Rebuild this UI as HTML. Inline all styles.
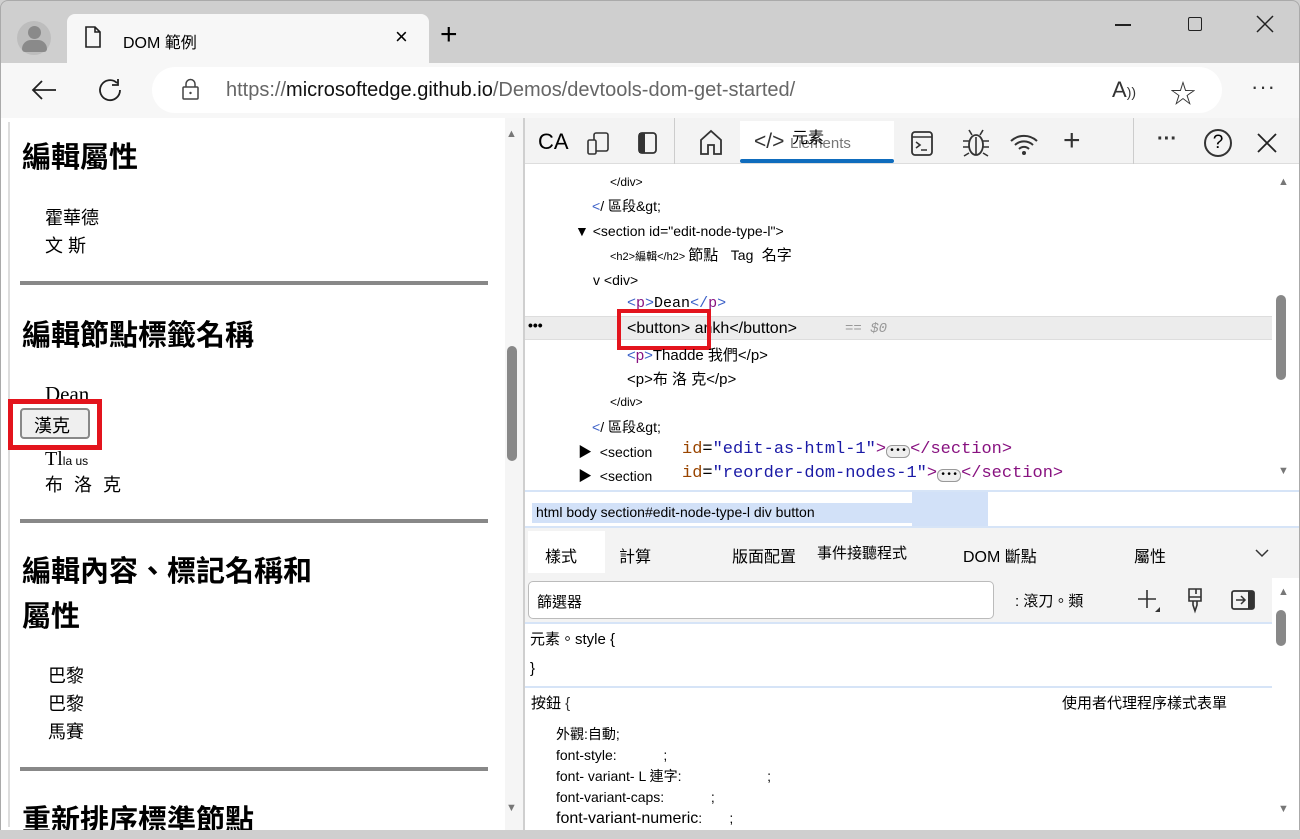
<!DOCTYPE html>
<html><head><meta charset="utf-8">
<style>
*{margin:0;padding:0;box-sizing:border-box}
body{width:1300px;height:835px;background:#cfcfcf;font-family:"Liberation Sans","Noto Sans CJK TC",sans-serif;position:relative;overflow:hidden;color:#000}
.a{position:absolute;white-space:nowrap}
.mono{font-family:"Liberation Mono","Noto Sans CJK TC",monospace}
.tag{color:#881280}.attr{color:#994500}.val{color:#1a1aa6}.br{color:#3c61c8}
</style></head><body>
<div class="a" style="left:0;top:0;width:1300px;height:835px;border:1px solid #aaa;border-radius:8px 8px 0 0"></div>
<div class="a" style="left:17px;top:21px;width:34px;height:34px;border-radius:50%;background:#bdbdbd"></div>
<div class="a" style="left:28px;top:26px;width:13px;height:13px;border-radius:50%;background:#8a8a8a"></div>
<div class="a" style="left:22px;top:40px;width:25px;height:12px;border-radius:12px 12px 4px 4px;background:#8a8a8a"></div>
<div class="a" style="left:67px;top:14px;width:362px;height:50px;background:#f7f7f7;border-radius:8px 8px 0 0"></div>
<svg class="a" style="left:84px;top:25px" width="18" height="24" viewBox="0 0 18 24"><path d="M2 2h9l5 5v15H2z M11 2v5h5" fill="none" stroke="#222" stroke-width="1.6"/></svg>
<div class="a" style="left:123px;top:29px;font-size:16px">DOM 範例</div>
<div class="a" style="left:395px;top:24px;font-size:22px">×</div>
<div class="a" style="left:440px;top:18px;font-size:30px;font-weight:300">+</div>
<div class="a" style="left:1115px;top:24px;width:16px;height:1.5px;background:#222"></div>
<div class="a" style="left:1188px;top:17px;width:14px;height:14px;border:1.5px solid #222;border-radius:2px"></div>
<svg class="a" style="left:1256px;top:15px" width="18" height="18"><path d="M1 1l16 16M17 1L1 17" stroke="#222" stroke-width="1.5"/></svg>
<div class="a" style="left:1px;top:63px;width:1298px;height:55px;background:#f7f7f7"></div>
<svg class="a" style="left:30px;top:78px" width="28" height="24"><path d="M26 12H3 M12 3L3 12l9 9" fill="none" stroke="#222" stroke-width="1.8"/></svg>
<svg class="a" style="left:97px;top:76px" width="28" height="28"><path d="M20 7a10 10 0 1 0 3 7 M21 3v6h-6" fill="none" stroke="#222" stroke-width="1.8"/></svg>
<div class="a" style="left:152px;top:67px;width:1070px;height:46px;background:#fff;border-radius:23px"></div>
<svg class="a" style="left:180px;top:78px" width="22" height="24"><rect x="3" y="9" width="15" height="12" rx="1" fill="none" stroke="#444" stroke-width="1.5"/><path d="M6 9V6a4.5 4.5 0 0 1 9 0v3" fill="none" stroke="#444" stroke-width="1.5"/><circle cx="10.5" cy="15" r="1.2" fill="#444"/></svg>
<div class="a" style="left:226px;top:79px;font-size:20px;color:#666">https://<span style="color:#111">microsoftedge.github.io</span>/Demos/devtools-dom-get-started/</div>
<div class="a" style="left:1112px;top:77px;font-size:22px;color:#333">A<span style="font-size:14px">))</span></div>
<div class="a" style="left:1170px;top:74px;font-size:26px;color:#333">☆</div>
<div class="a" style="left:1251px;top:74px;font-size:22px;color:#333;letter-spacing:1px">···</div>
<div class="a" style="left:1px;top:118px;width:522px;height:717px;background:#fff"></div>
<div class="a" style="left:505px;top:118px;width:18px;height:712px;background:#f5f5f5"></div>
<div class="a" style="left:506px;top:128px;font-size:11px;color:#777">▲</div>
<div class="a" style="left:506px;top:802px;font-size:11px;color:#777">▼</div>
<div class="a" style="left:507px;top:346px;width:10px;height:115px;background:#888;border-radius:5px"></div>
<div class="a" style="left:8px;top:122px;width:2px;height:705px;background:#ddd"></div>
<div class="a" style="left:22px;top:134px;font-size:29px;font-weight:bold">編輯屬性</div>
<div class="a" style="left:45px;top:204px;font-size:18px;line-height:28px">霍華德<br>文 斯</div>
<div class="a" style="left:20px;top:281px;width:468px;height:4px;background:#888"></div>
<div class="a" style="left:22px;top:312px;font-size:29px;font-weight:bold">編輯節點標籤名稱</div>
<div class="a" style="left:45px;top:382px;font-size:21px;font-family:'Liberation Serif',serif">Dean</div>
<div class="a" style="left:8px;top:399px;width:94px;height:51px;border:5px solid #e3141d"></div>
<div class="a" style="left:20px;top:408px;width:70px;height:31px;border:2px solid #888;border-radius:4px;background:#efefef;font-size:18px;padding:2px 0 0 12px">漢克</div>
<div class="a" style="left:45px;top:448px;font-size:20px;font-family:'Liberation Serif',serif">Tl<span style="font-size:12px;font-family:'Liberation Sans'">la us</span></div>
<div class="a" style="left:45px;top:471px;font-size:18px;letter-spacing:3px">布 洛 克</div>
<div class="a" style="left:20px;top:519px;width:468px;height:4px;background:#888"></div>
<div class="a" style="left:22px;top:550px;font-size:29px;font-weight:bold;line-height:45px">編輯內容、標記名稱和<br>屬性</div>
<div class="a" style="left:48px;top:662px;font-size:18px;line-height:28px">巴黎<br>巴黎<br>馬賽</div>
<div class="a" style="left:20px;top:767px;width:468px;height:4px;background:#888"></div>
<div class="a" style="left:22px;top:797px;font-size:29px;font-weight:bold">重新排序標準節點</div>
<div class="a" style="left:523px;top:118px;width:2px;height:717px;background:#cfcfcf"></div>
<div class="a" style="left:525px;top:118px;width:774px;height:717px;background:#fff"></div>
<div class="a" style="left:525px;top:118px;width:774px;height:46px;background:#f3f3f3;border-bottom:1px solid #ddd"></div>
<div class="a" style="left:538px;top:129px;font-size:22px">CA</div>
<svg class="a" style="left:585px;top:130px" width="28" height="28"><rect x="9" y="3" width="14" height="18" rx="2" fill="none" stroke="#333" stroke-width="1.6"/><rect x="3" y="10" width="8" height="14" rx="1.5" fill="#f3f3f3" stroke="#333" stroke-width="1.6"/></svg>
<svg class="a" style="left:636px;top:130px" width="24" height="26"><rect x="3" y="3" width="17" height="20" rx="3" fill="none" stroke="#333" stroke-width="1.8"/><rect x="3" y="3" width="6" height="20" fill="#333"/></svg>
<div class="a" style="left:674px;top:118px;width:1px;height:46px;background:#ccc"></div>
<svg class="a" style="left:697px;top:128px" width="28" height="28"><path d="M4 26V12L14 3l10 9v14h-7v-9h-6v9z" fill="none" stroke="#333" stroke-width="1.8"/></svg>
<div class="a" style="left:740px;top:121px;width:154px;height:42px;background:#fff"></div>
<div class="a" style="left:740px;top:159px;width:154px;height:4px;background:#0f6cbd;border-radius:2px"></div>
<div class="a" style="left:754px;top:130px;font-size:21px;color:#333">&lt;/&gt;</div>
<div class="a" style="left:790px;top:135px;font-size:15px;color:#777">Liements</div>
<div class="a" style="left:792px;top:124px;font-size:16px">元素</div>
<svg class="a" style="left:909px;top:130px" width="28" height="28"><rect x="3" y="2" width="20" height="23" rx="3" fill="none" stroke="#333" stroke-width="1.8"/><path d="M3 7h20 M7 12l4 3-4 3 M12 20h6" fill="none" stroke="#333" stroke-width="1.6"/></svg>
<svg class="a" style="left:960px;top:127px" width="32" height="32"><ellipse cx="16" cy="18" rx="7" ry="10" fill="none" stroke="#333" stroke-width="1.8"/><path d="M12 8l-3-5 M20 8l3-5 M9 14H3 M9 20H3 M9 26l-5 3 M23 14h6 M23 20h6 M23 26l5 3 M16 10v18" fill="none" stroke="#333" stroke-width="1.6"/></svg>
<svg class="a" style="left:1008px;top:131px" width="32" height="26"><path d="M3 10a19 19 0 0 1 26 0 M7 14a13 13 0 0 1 18 0 M11 18a7 7 0 0 1 10 0" fill="none" stroke="#333" stroke-width="2"/><circle cx="16" cy="22" r="2" fill="#333"/></svg>
<div class="a" style="left:1063px;top:124px;font-size:30px;font-weight:300;color:#333">+</div>
<div class="a" style="left:1133px;top:118px;width:1px;height:46px;background:#ccc"></div>
<div class="a" style="left:1157px;top:128px;font-size:20px;font-weight:bold;color:#333">···</div>
<div class="a" style="left:1204px;top:129px;width:28px;height:28px;border:2px solid #333;border-radius:50%;font-size:19px;text-align:center;line-height:24px">?</div>
<svg class="a" style="left:1257px;top:133px" width="20" height="20"><path d="M1 1l18 18M19 1L1 19" stroke="#222" stroke-width="1.8"/></svg>
<div class="a" style="left:1278px;top:176px;font-size:11px;color:#777">▲</div>
<div class="a" style="left:1278px;top:465px;font-size:11px;color:#777">▼</div>
<div class="a" style="left:1276px;top:295px;width:10px;height:85px;background:#888;border-radius:5px"></div>
<div class="a" style="left:525px;top:316px;width:747px;height:24px;background:#ececec;border-top:1px solid #ddd;border-bottom:1px solid #ddd"></div>
<div class="a" style="left:610px;top:175px;font-size:12px">&lt;/div&gt;</div>
<div class="a" style="left:592px;top:196px;font-size:14px"><span class="br">&lt;</span>/ 區段&amp;gt;</div>
<div class="a" style="left:575px;top:223px;font-size:14px">▼ &lt;section id="edit-node-type-l"&gt;</div>
<div class="a" style="left:610px;top:244px;font-size:11px">&lt;h2&gt;編輯&lt;/h2&gt; <span style="font-size:15px">節點 &nbsp; <span style="font-size:14px">Tag</span> &nbsp;名字</span></div>
<div class="a" style="left:593px;top:272px;font-size:14px">v &lt;div&gt;</div>
<div class="a mono" style="left:627px;top:295px;font-size:15px"><span class="br">&lt;</span><span class="tag">p</span><span class="br">&gt;</span>Dean<span class="br">&lt;/</span><span class="tag">p</span><span class="br">&gt;</span></div>
<div class="a" style="left:528px;top:317px;font-size:14px;font-weight:bold">•••</div>
<div class="a" style="left:627px;top:320px;font-size:16px">&lt;button&gt; ankh&lt;/button&gt;</div>
<div class="a mono" style="left:845px;top:321px;font-size:14px;color:#999;font-style:italic">== $0</div>
<div class="a" style="left:617px;top:309px;width:94px;height:41px;border:4px solid #e3141d"></div>
<div class="a" style="left:627px;top:344px;font-size:15px"><span class="br">&lt;</span><span class="tag">p</span><span class="br">&gt;</span>Thadde 我們&lt;/p&gt;</div>
<div class="a" style="left:627px;top:368px;font-size:15px">&lt;p&gt;布 洛 克&lt;/p&gt;</div>
<div class="a" style="left:610px;top:395px;font-size:12px">&lt;/div&gt;</div>
<div class="a" style="left:592px;top:417px;font-size:14px"><span class="br">&lt;</span>/ 區段&amp;gt;</div>
<div class="a" style="left:578px;top:442px;font-size:14px">▶ &nbsp;&lt;section</div>
<div class="a mono" style="left:682px;top:440px;font-size:17px"><span class="attr">id</span>=<span class="val">"edit-as-html-1"</span><span class="tag">&gt;</span><span style="font-size:10px;border:1px solid #999;border-radius:6px;padding:0 2px;background:#eee">•••</span><span class="tag">&lt;/section&gt;</span></div>
<div class="a" style="left:578px;top:466px;font-size:14px">▶ &nbsp;&lt;section</div>
<div class="a mono" style="left:682px;top:464px;font-size:17px"><span class="attr">id</span>=<span class="val">"reorder-dom-nodes-1"</span><span class="tag">&gt;</span><span style="font-size:10px;border:1px solid #999;border-radius:6px;padding:0 2px;background:#eee">•••</span><span class="tag">&lt;/section&gt;</span></div>
<div class="a" style="left:525px;top:490px;width:774px;height:38px;border-top:2px solid #d6e4f7;border-bottom:2px solid #d6e4f7"></div>
<div class="a" style="left:912px;top:492px;width:76px;height:34px;background:#d2e1f8"></div>
<div class="a" style="left:532px;top:503px;width:380px;height:20px;background:#d2e1f8"></div>
<div class="a" style="left:536px;top:504px;font-size:14px">html body section#edit-node-type-l div button</div>
<div class="a" style="left:525px;top:528px;width:774px;height:50px;background:#f3f3f3"></div>
<div class="a" style="left:528px;top:531px;width:77px;height:42px;background:#fff"></div>
<div class="a" style="left:545px;top:543px;font-size:16px">樣式</div>
<div class="a" style="left:619px;top:543px;font-size:16px">計算</div>
<div class="a" style="left:732px;top:543px;font-size:16px">版面配置</div>
<div class="a" style="left:817px;top:542px;font-size:15px">事件接聽程式</div>
<div class="a" style="left:963px;top:543px;font-size:16px">DOM 斷點</div>
<div class="a" style="left:1134px;top:543px;font-size:16px">屬性</div>
<svg class="a" style="left:1255px;top:548px" width="14" height="10"><path d="M1 2l6 6 6-6" fill="none" stroke="#333" stroke-width="1.5"/></svg>
<div class="a" style="left:525px;top:578px;width:747px;height:46px;background:#f3f3f3;border-bottom:2px solid #d6e4f7"></div>
<div class="a" style="left:528px;top:581px;width:466px;height:38px;background:#fff;border:1px solid #bbb;border-radius:5px"></div>
<div class="a" style="left:537px;top:591px;font-size:15px">篩選器</div>
<div class="a" style="left:1015px;top:590px;font-size:15px">: 滾刀。類</div>
<svg class="a" style="left:1136px;top:588px" width="26" height="26"><path d="M11 2v18M2 11h18" stroke="#333" stroke-width="1.6"/><path d="M19 24h5v-5z" fill="#333"/></svg>
<svg class="a" style="left:1185px;top:587px" width="20" height="28"><path d="M4 2h12v12H4z M4 10h12 M8 14v4l2 6 2-6v-4 M11 2v5" fill="none" stroke="#333" stroke-width="1.6"/></svg>
<svg class="a" style="left:1230px;top:589px" width="26" height="22"><rect x="2" y="2" width="22" height="18" rx="2" fill="none" stroke="#333" stroke-width="1.8"/><rect x="18" y="2" width="6" height="18" fill="#333"/><path d="M6 11h8 M11 7l4 4-4 4" fill="none" stroke="#333" stroke-width="1.5"/></svg>
<div class="a" style="left:1272px;top:578px;width:27px;height:252px;background:#fff"></div>
<div class="a" style="left:1278px;top:586px;font-size:11px;color:#777">▲</div>
<div class="a" style="left:1278px;top:803px;font-size:11px;color:#777">▼</div>
<div class="a" style="left:1276px;top:610px;width:10px;height:36px;background:#888;border-radius:5px"></div>
<div class="a" style="left:530px;top:628px;font-size:15px">元素。style {</div>
<div class="a" style="left:530px;top:660px;font-size:15px">}</div>
<div class="a" style="left:525px;top:686px;width:747px;height:2px;background:#d6e4f7"></div>
<div class="a" style="left:531px;top:692px;font-size:15px">按鈕 <span style="color:#333">{</span></div>
<div class="a" style="left:1062px;top:692px;font-size:15px">使用者代理程序樣式表單</div>
<div class="a" style="left:556px;top:724px;font-size:14px;line-height:21px">外觀:自動;<br>font-style: &nbsp; &nbsp; &nbsp; &nbsp; &nbsp; &nbsp;;<br>font- variant- L 連字: &nbsp; &nbsp; &nbsp; &nbsp; &nbsp; &nbsp; &nbsp; &nbsp; &nbsp; &nbsp; &nbsp;;<br>font-variant-caps: &nbsp; &nbsp; &nbsp; &nbsp; &nbsp; &nbsp;;<br><span style="font-size:16px">font-variant-numeric</span>: &nbsp; &nbsp; &nbsp; ;</div>
<div class="a" style="left:0;top:830px;width:1300px;height:5px;background:#cfcfcf"></div>
</body></html>
